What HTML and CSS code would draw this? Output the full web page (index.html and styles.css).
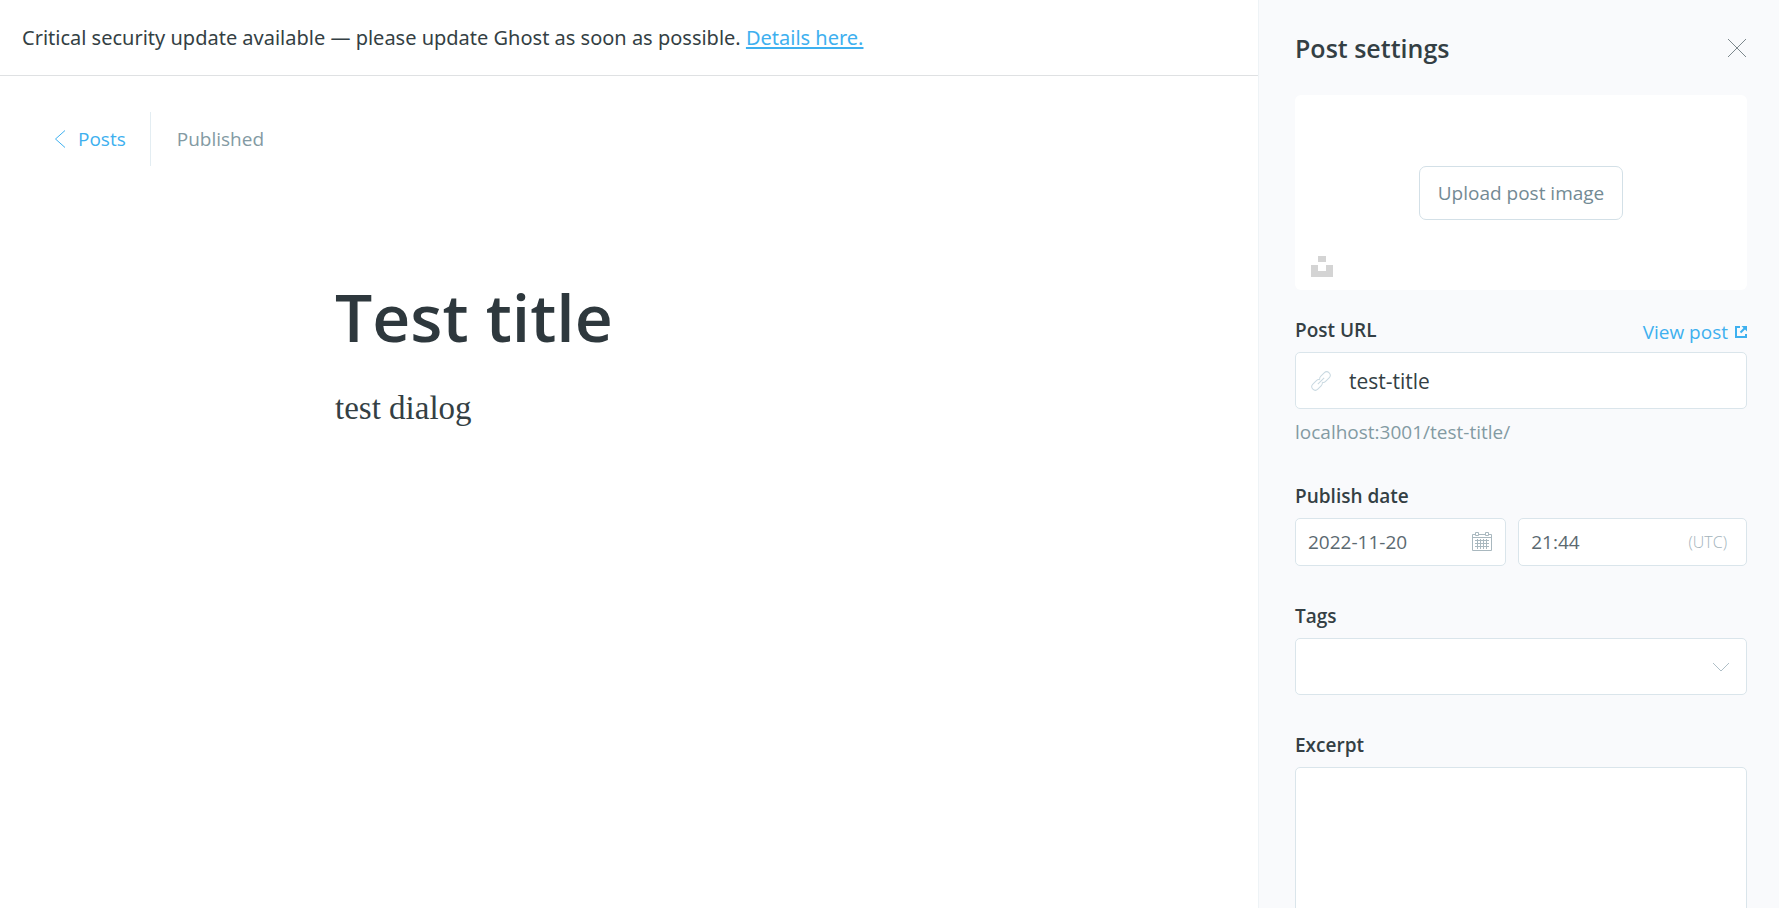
FILE: index.html
```html
<!DOCTYPE html>
<html lang="en">
<head>
<meta charset="utf-8">
<meta name="viewport" content="width=device-width, initial-scale=1">
<title>Test title - Editor</title>
<link rel="stylesheet" href="styles.css">
</head>
<body>
<div class="app">
  <main class="editor">
    <div class="alert" role="status">Critical security update available — please update Ghost as soon as possible. <a class="alert-link" href="#">Details here.</a></div>
    <header class="editor-header">
      <a class="back-link" href="#">
        <svg class="back-icon" viewBox="0 0 12 18" aria-hidden="true"><path d="M11 .5 1.500 9l9.500 8.500"/></svg>
        Posts
      </a>
      <span class="status">Published</span>
    </header>
    <article class="post">
      <h1 class="post-title">Test title</h1>
      <p class="post-body">test dialog</p>
    </article>
  </main>

  <aside class="settings">
    <header class="settings-header">
      <h2 class="settings-title">Post settings</h2>
      <button class="close" type="button" aria-label="Close">
        <svg viewBox="0 0 20 20" aria-hidden="true"><path d="m1 1 18 18M19 1 1 19"/></svg>
      </button>
    </header>
    <form class="settings-form">
      <div class="uploader">
        <button class="upload-button" type="button">Upload post image</button>
        <button class="unsplash" type="button" aria-label="Unsplash">
          <svg viewBox="0 0 22 21" aria-hidden="true"><path d="M7 0h8v6H7zM0 9h7v6h8V9h7v12H0z"/></svg>
        </button>
      </div>

      <div class="field field-url">
        <div class="label-row">
          <label class="label" for="url">Post URL</label>
          <a class="view-link" href="#">View post
            <svg viewBox="0 0 12 12" aria-hidden="true"><path d="M5 1H1v10h10V8"/><path d="M10.500 1.500 5.500 6.500"/><path class="arrow-head" d="M6.500 0H12v5.500z"/></svg>
          </a>
        </div>
        <div class="control">
          <svg class="link-icon" viewBox="0 0 20 20" aria-hidden="true"><g transform="rotate(-45 10 10)"><path d="M10 11.800A3.500 3.500 0 0 1 7 13.500H2A3.500 3.500 0 0 1 2 6.500H7A3.500 3.500 0 0 1 10 8.200M10 11.800A3.500 3.500 0 0 0 13 13.500H18A3.500 3.500 0 0 0 18 6.500H13A3.500 3.500 0 0 0 10 8.200M5.500 10h9"/></g></svg>
          <input class="input" id="url" type="text" value="test-title">
        </div>
        <p class="hint">localhost:3001/test-title/</p>
      </div>

      <div class="field field-date">
        <label class="label" for="date">Publish date</label>
        <div class="date-row">
          <div class="control control-small">
            <input class="input" id="date" type="text" value="2022-11-20">
            <svg class="calendar-icon" viewBox="0 0 20 20" aria-hidden="true"><path d="M3.500 2.500h-3v16h19v-16h-3M6.500 2.500h7M.5 5.500h19M3.500.5h3v3h-3zM13.500.5h3v3h-3zM3 8.500h14M3 11.500h14M3 14.500h14M5.500 7v10M8.500 7v10M11.500 7v10M14.500 7v10"/></svg>
          </div>
          <div class="control control-small">
            <input class="input" type="text" value="21:44" aria-label="Publish time">
            <span class="timezone">(UTC)</span>
          </div>
        </div>
      </div>

      <div class="field field-tags">
        <label class="label" for="tags">Tags</label>
        <div class="control">
          <select class="input select" id="tags"><option></option></select>
          <svg class="chevron" viewBox="0 0 18 10" aria-hidden="true"><path d="m1 1 8 8 8-8"/></svg>
        </div>
      </div>

      <div class="field">
        <label class="label" for="excerpt">Excerpt</label>
        <textarea class="textarea" id="excerpt"></textarea>
      </div>
    </form>
  </aside>
</div>
</body>
</html>
```
FILE: styles.css
```css
* {
  box-sizing: border-box;
}

body {
  margin: 0;
  font: 19px/24px "Open Sans", "Noto Sans", sans-serif;
  color: #343f44;
  background: #fff;
}

a {
  color: #3eb0ef;
  text-decoration: none;
}

svg {
  display: block;
  flex: none;
  fill: none;
  stroke: currentColor;
}

button,
input,
select,
textarea {
  font: inherit;
  color: inherit;
}

button {
  padding: 0;
  border: 0;
  background: none;
  cursor: pointer;
}

.app {
  display: flex;
  height: 100vh;
  overflow: hidden;
}

.editor {
  flex: 1;
  min-width: 0;
}

.alert {
  padding: 23px 22px;
  border-bottom: 1px solid #dfe1e3;
  font-family: "Noto Sans", "Open Sans", sans-serif;
  font-size: 20px;
  line-height: 29px;
}

.alert-link {
  text-decoration: underline;
  text-decoration-thickness: 2px;
  text-underline-offset: 2px;
}

.editor-header {
  display: flex;
  align-items: center;
  padding: 36px 54px 0;
}

.back-link {
  display: flex;
  align-items: center;
  gap: 12px;
  padding: 15px 24px 15px 0;
  border-right: 1px solid #e3edf2;
}

.back-icon {
  width: 12px;
  height: 18px;
}

.status {
  padding-left: 26px;
  color: #839aa3;
}

.post {
  width: 100%;
  max-width: 636px;
  margin: 0 auto;
  padding: 104px 24px 0;
}

.post-title {
  margin: 0;
  font-size: 66px;
  font-weight: 600;
  line-height: 92px;
  color: #2e383d;
}

.post-body {
  margin: 24px 0 0;
  font: 33px/44px Georgia, "Liberation Serif", serif;
}

.settings {
  flex: none;
  width: 521px;
  padding: 0 32px 0 37px;
  border-left: 1px solid #eef3f6;
  background: #f9fafc;
}

.settings {
  padding-left: 36px;
}

.settings-header {
  display: flex;
  align-items: center;
  justify-content: space-between;
  height: 95px;
}

.settings-title {
  margin: 0;
  font-size: 25px;
  font-weight: 600;
  line-height: 32px;
}

.close {
  color: #7c878c;
}

.close svg {
  width: 20px;
  height: 20px;
}

.uploader {
  position: relative;
  display: flex;
  align-items: center;
  justify-content: center;
  height: 195px;
  border-radius: 6px;
  background: #fff;
}

.upload-button {
  padding: 14px 18px;
  border: 1px solid #d3e0e7;
  border-radius: 7px;
  line-height: 24px;
  color: #738a94;
}

.unsplash {
  position: absolute;
  left: 16px;
  bottom: 13px;
}

.unsplash svg {
  width: 22px;
  height: 21px;
  fill: #d4d4d4;
  stroke: none;
}

.field {
  margin-bottom: 40px;
}

.field-url {
  margin-top: 28px;
}

.label {
  display: block;
  margin-bottom: 10px;
  font-weight: 600;
}

.label-row {
  display: flex;
  justify-content: space-between;
}

.view-link {
  display: flex;
  align-items: center;
  gap: 7px;
  height: 28px;
}

.view-link svg {
  width: 12px;
  height: 12px;
  stroke-width: 2;
}

.arrow-head {
  fill: currentColor;
  stroke: none;
}

.control {
  display: flex;
  align-items: center;
  height: 57px;
  border: 1px solid #dae5eb;
  border-radius: 5px;
  background: #fff;
  font-size: 21px;
}

.control-small {
  height: 48px;
  font-size: 19px;
  color: #5b6970;
}

.input {
  flex: 1;
  width: 100%;
  min-width: 0;
  height: 100%;
  padding: 0 12px;
  border: 0;
  outline: 0;
  background: none;
}

.link-icon {
  width: 20px;
  height: 20px;
  margin: 0 6px 0 15px;
  overflow: visible;
  color: #c9d9e1;
}

.hint {
  margin: 11px 0 0;
  color: #839aa3;
}

.field-date {
  margin-bottom: 38px;
}

.date-row {
  display: grid;
  grid-template-columns: 12fr 13fr;
  gap: 12px;
}

.calendar-icon {
  width: 20px;
  height: 20px;
  margin-right: 13px;
  color: #a9b8bf;
}

.timezone {
  margin-right: 19px;
  font-size: 16px;
  font-weight: 300;
  color: #a3b3bb;
}

.field-tags {
  margin-bottom: 38px;
}

.select {
  appearance: none;
}

.chevron {
  width: 18px;
  height: 10px;
  margin-right: 16px;
  color: #afbfc7;
}

.textarea {
  display: block;
  width: 100%;
  height: 160px;
  padding: 12px;
  border: 1px solid #dae5eb;
  border-radius: 5px;
  background: #fff;
  resize: none;
}
```
